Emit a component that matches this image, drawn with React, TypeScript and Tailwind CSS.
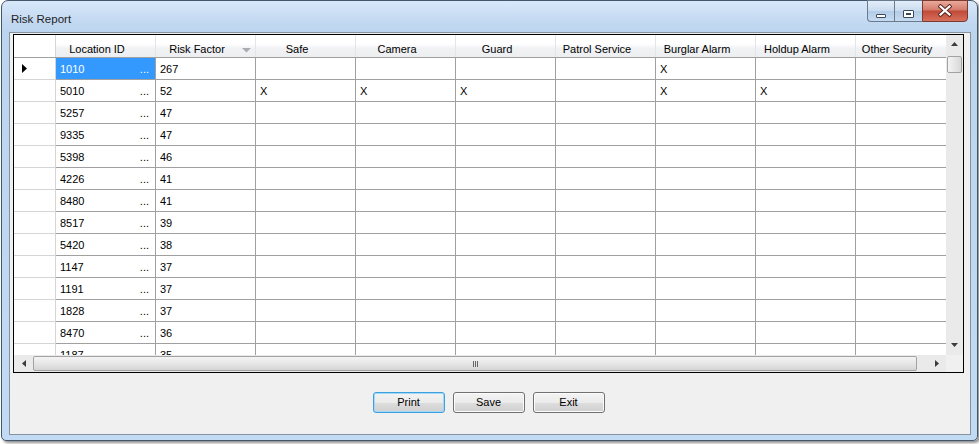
import React from 'react';

type Row = {
  id: string;
  risk: number;
  marks: number[]; // indexes of security columns with an X
};

const securityCols = [
  'Safe',
  'Camera',
  'Guard',
  'Patrol Service',
  'Burglar Alarm',
  'Holdup Alarm',
  'Other Security',
];

const rows: Row[] = [
  { id: '1010', risk: 267, marks: [4] },
  { id: '5010', risk: 52, marks: [0, 1, 2, 4, 5] },
  { id: '5257', risk: 47, marks: [] },
  { id: '9335', risk: 47, marks: [] },
  { id: '5398', risk: 46, marks: [] },
  { id: '4226', risk: 41, marks: [] },
  { id: '8480', risk: 41, marks: [] },
  { id: '8517', risk: 39, marks: [] },
  { id: '5420', risk: 38, marks: [] },
  { id: '1147', risk: 37, marks: [] },
  { id: '1191', risk: 37, marks: [] },
  { id: '1828', risk: 37, marks: [] },
  { id: '8470', risk: 36, marks: [] },
  { id: '1187', risk: 35, marks: [] },
];

function TitleButtons() {
  return (
    <div className="absolute -top-[1px] right-[9px] flex h-[22px]">
      {/* minimize */}
      <div className="flex w-[27px] items-start justify-center rounded-bl-[4px] border border-r-0 border-[#6a7b90] bg-[linear-gradient(180deg,#e4eefa_0%,#c9dbef_50%,#b3cbe6_51%,#c6dbf1_100%)] pt-[13px]">
        <div className="h-[4px] w-[10px] rounded-[1px] border border-[#39485a] bg-white" />
      </div>
      {/* maximize */}
      <div className="flex w-[28px] items-start justify-center border border-r-0 border-[#6a7b90] bg-[linear-gradient(180deg,#e4eefa_0%,#c9dbef_50%,#b3cbe6_51%,#c6dbf1_100%)] pt-[9px]">
        <div className="flex h-[8px] w-[11px] items-center justify-center rounded-[1px] border border-[#39485a] bg-white">
          <div className="h-[2px] w-[5px] border border-[#39485a] bg-[#dbe6f2]" />
        </div>
      </div>
      {/* close */}
      <div className="flex w-[46px] items-start justify-center rounded-br-[4px] border border-[#7a3a30] bg-[linear-gradient(180deg,#e9a99b_0%,#d47b6b_45%,#c14a38_50%,#d6705c_100%)] pt-[3px]">
        <svg width="14" height="13" viewBox="0 0 14 13">
          <path
            d="M2.5 2.5 L11.5 10.5 M11.5 2.5 L2.5 10.5"
            stroke="#5a2a22"
            strokeWidth="4.2"
            strokeLinecap="square"
          />
          <path
            d="M2.5 2.5 L11.5 10.5 M11.5 2.5 L2.5 10.5"
            stroke="#ffffff"
            strokeWidth="2.2"
            strokeLinecap="square"
          />
        </svg>
      </div>
    </div>
  );
}

function HeaderRow() {
  return (
    <div className="flex h-[23px] shrink-0 border-b border-[#a0a0a0] bg-[linear-gradient(180deg,#ffffff_0%,#ffffff_40%,#f1f2f4_60%,#eceef1_100%)]">
      <div className="w-[42px] shrink-0 border-r border-[#d5d5d5] bg-white" />
      <HeaderCell label="Location ID" />
      <HeaderCell label="Risk Factor" sorted />
      {securityCols.map((c) => (
        <HeaderCell key={c} label={c} />
      ))}
    </div>
  );
}

function HeaderCell({ label, sorted }: { label: string; sorted?: boolean }) {
  return (
    <div className="relative w-[100px] shrink-0 border-r border-[#e3e5e8] pr-[17px] pt-[6px] text-center leading-[16px] whitespace-nowrap">
      {label}
      {sorted && (
        <svg
          className="absolute right-[4px] top-[13px]"
          width="9"
          height="5"
          viewBox="0 0 9 5"
        >
          <path d="M0 0 H9 L4.5 4.5 Z" fill="#a8acb2" />
        </svg>
      )}
    </div>
  );
}

function DataRow({ row, index }: { row: Row; index: number }) {
  const selected = index === 0;
  return (
    <div className="flex h-[22px] shrink-0">
      <div className="flex w-[42px] shrink-0 items-center border-r border-b border-[#d5d5d5] bg-white pl-[8px]">
        {selected && (
          <svg width="5" height="9" viewBox="0 0 5 9">
            <path d="M0 0 L5 4.5 L0 9 Z" fill="#000" />
          </svg>
        )}
      </div>
      <div
        className={
          selected
            ? 'flex w-[100px] shrink-0 justify-between border-r border-b border-[#a0a0a0] bg-[#3399ff] pl-[4px] pr-[6px] pt-[1px] leading-[20px] text-white'
            : 'flex w-[100px] shrink-0 justify-between border-r border-b border-[#a0a0a0] pl-[4px] pr-[6px] pt-[1px] leading-[20px]'
        }
      >
        <span>{row.id}</span>
        <span>...</span>
      </div>
      <div className="w-[100px] shrink-0 border-r border-b border-[#a0a0a0] pl-[4px] pt-[1px] leading-[20px]">
        {row.risk}
      </div>
      {securityCols.map((c, i) => (
        <div
          key={c}
          className="w-[100px] shrink-0 border-r border-b border-[#a0a0a0] pl-[4px] pt-[1px] leading-[20px]"
        >
          {row.marks.includes(i) ? 'X' : ''}
        </div>
      ))}
    </div>
  );
}

function VScrollBar() {
  return (
    <div className="flex w-[17px] shrink-0 flex-col bg-[#eaeaea]">
      <div className="flex h-[17px] shrink-0 items-center justify-center">
        <svg width="7" height="4" viewBox="0 0 7 4">
          <path d="M0 4 L3.5 0 L7 4 Z" fill="#3c3c3c" />
        </svg>
      </div>
      <div className="mx-[1px] mt-[4px] h-[17px] shrink-0 rounded-[2px] border border-[#a2a2a2] bg-[linear-gradient(90deg,#f4f4f4,#e6e6e6_50%,#d8d8d8)]" />
      <div className="flex-1" />
      <div className="flex h-[17px] shrink-0 items-center justify-center pb-[3px]">
        <svg width="7" height="4" viewBox="0 0 7 4">
          <path d="M0 0 L7 0 L3.5 4 Z" fill="#3c3c3c" />
        </svg>
      </div>
    </div>
  );
}

function HScrollBar() {
  return (
    <div className="flex h-[17px] shrink-0 bg-[#eaeaea]">
      <div className="flex w-[19px] shrink-0 items-center justify-center">
        <svg width="4" height="7" viewBox="0 0 4 7">
          <path d="M4 0 L0 3.5 L4 7 Z" fill="#3c3c3c" />
        </svg>
      </div>
      <div className="my-[1px] flex w-[884px] shrink-0 items-center justify-center rounded-[2px] border border-[#a2a2a2] bg-[linear-gradient(180deg,#f4f4f4,#e6e6e6_50%,#d5d5d5)]">
        <div className="flex gap-[1px]">
          <div className="h-[6px] w-[1px] bg-[#666]" />
          <div className="h-[6px] w-[1px] bg-[#666]" />
          <div className="h-[6px] w-[1px] bg-[#666]" />
        </div>
      </div>
      <div className="flex flex-1 items-center justify-center pl-[10px]">
        <svg width="4" height="7" viewBox="0 0 4 7">
          <path d="M0 0 L4 3.5 L0 7 Z" fill="#3c3c3c" />
        </svg>
      </div>
      <div className="w-[17px] shrink-0 bg-[#f0f0f0]" />
    </div>
  );
}

function Grid() {
  return (
    <div className="flex h-[339px] w-[951px] flex-col border border-black bg-white">
      <div className="flex min-h-0 flex-1">
        <div className="flex min-w-0 flex-1 flex-col overflow-hidden">
          <HeaderRow />
          {rows.map((r, i) => (
            <DataRow key={r.id} row={r} index={i} />
          ))}
        </div>
        <VScrollBar />
      </div>
      <HScrollBar />
    </div>
  );
}

function FormButton({ label, focused }: { label: string; focused?: boolean }) {
  return (
    <button
      className={
        focused
          ? 'h-[21px] w-[72px] rounded-[3px] border border-[#3c9fe0] bg-[linear-gradient(180deg,#f3f3f3_0%,#ebebeb_50%,#dddddd_51%,#cfcfcf_100%)] shadow-[inset_0_0_0_1px_#a4d9f5] leading-[19px] text-black'
          : 'h-[21px] w-[72px] rounded-[3px] border border-[#707070] bg-[linear-gradient(180deg,#f3f3f3_0%,#ebebeb_50%,#dddddd_51%,#cfcfcf_100%)] shadow-[inset_0_0_0_1px_#fcfcfc] leading-[19px] text-black'
      }
    >
      {label}
    </button>
  );
}

export default function App() {
  return (
    <div
      className="h-[444px] w-[979px] overflow-hidden bg-white pl-[1px] text-[11px] text-black"
      style={{ fontFamily: '"Liberation Sans", Arial, sans-serif' }}
    >
      <div className="relative flex h-[441px] w-[977px] flex-col rounded-t-[7px] rounded-b-[5px] border border-[#44566b] bg-[linear-gradient(180deg,#d8e8f9_0%,#c3d9f1_20px,#bcd5ef_31px,#c2dbf4_100%)] shadow-[2px_2px_3px_rgba(0,0,0,0.45)]">
        <div className="h-[31px] shrink-0 pl-[9px] pt-[11px] text-[11.5px] leading-[14px] text-[#1e1e1e]">
          Risk Report
        </div>
        <TitleButtons />
        <div className="ml-[7px] flex h-[403px] w-[962px] flex-col border border-[#87929f] bg-[#f0f0f0] pl-[3px] pt-[1px]">
          <Grid />
          <div className="mt-[19px] flex justify-center gap-[8px] pr-[6px]">
            <FormButton label="Print" focused />
            <FormButton label="Save" />
            <FormButton label="Exit" />
          </div>
        </div>
      </div>
    </div>
  );
}
